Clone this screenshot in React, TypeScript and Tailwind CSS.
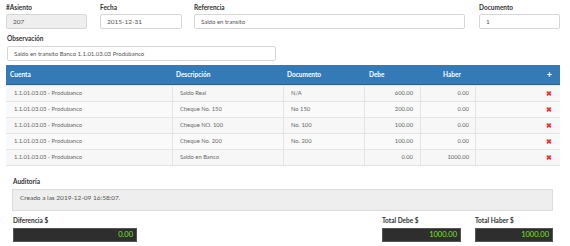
import type { FC, ReactNode } from 'react';

interface Line {
	cuenta: string;
	descripcion: string;
	documento: string;
	debe: string;
	haber: string;
}

const LINES: Line[] = [
	{ cuenta: '1.1.01.03.03 - Produbanco', descripcion: 'Saldo Real', documento: 'N/A', debe: '600.00', haber: '0.00' },
	{ cuenta: '1.1.01.03.03 - Produbanco', descripcion: 'Cheque No. 150', documento: 'No 150', debe: '200.00', haber: '0.00' },
	{ cuenta: '1.1.01.03.03 - Produbanco', descripcion: 'Cheque NO. 100', documento: 'No. 100', debe: '100.00', haber: '0.00' },
	{ cuenta: '1.1.01.03.03 - Produbanco', descripcion: 'Cheque No. 200', documento: 'No. 200', debe: '100.00', haber: '0.00' },
	{ cuenta: '1.1.01.03.03 - Produbanco', descripcion: 'Saldo en Banco', documento: '', debe: '0.00', haber: '1000.00' },
];

const COLS = 'grid grid-cols-[166px_111px_81px_56px_55px_85px]';

const Label: FC<{ children: ReactNode }> = ({ children }) => (
	<div className="text-[6.5px] leading-[9px] font-bold text-[#333]">{children}</div>
);

const Field: FC<{ value: string; readOnly?: boolean; className?: string }> = ({ value, readOnly, className }) => (
	<div
		className={`flex items-center h-[15px] px-[6px] border border-[#d6d6d6] rounded-[2px] text-[6.5px] text-[#555] ${
			readOnly ? 'bg-[#eeeeee]' : 'bg-white'
		} ${className ?? ''}`}
	>
		{value}
	</div>
);

const TotalBox: FC<{ label: string; value: string; width: string }> = ({ label, value, width }) => (
	<div className={`flex flex-col gap-[3px] ${width}`}>
		<div className="text-[6.5px] leading-[9px] font-bold text-[#333]">{label}</div>
		<div className="flex items-center justify-end h-[14px] px-[3px] bg-[#2e2e2e] border border-[#555] text-[7.5px] text-[#74e82c]">
			{value}
		</div>
	</div>
);

export default function App() {
	return (
		<div className="w-[570px] h-[246px] bg-white overflow-hidden font-['Lato','Liberation_Sans',sans-serif]">
			<div className="flex pl-[6px] pt-[3px]">
				<div className="flex flex-col gap-[2px] w-[81px]">
					<Label>#Asiento</Label>
					<Field value="207" readOnly />
				</div>
				<div className="flex flex-col gap-[2px] w-[82px] ml-[13px]">
					<Label>Fecha</Label>
					<Field value="2015-12-31" />
				</div>
				<div className="flex flex-col gap-[2px] w-[271px] ml-[12px]">
					<Label>Referencia</Label>
					<Field value="Saldo en transito" className="text-[6px]" />
				</div>
				<div className="flex flex-col gap-[2px] w-[81px] ml-[14px]">
					<Label>Documento</Label>
					<Field value="1" />
				</div>
			</div>

			<div className="flex flex-col gap-[3px] pl-[7px] pt-[5px] w-[276px]">
				<Label>Observación</Label>
				<Field value="Saldo en transito  Banco 1.1.01.03.03 Produbanco" className="h-[14px] text-[6px]" />
			</div>

			<div className="ml-[6px] mt-[4px] w-[554px] border-b border-[#e2e2e2]">
				<div className={`${COLS} h-[20px] bg-[#337ab7] border-b border-[#2a6496] text-white text-[6.5px] font-bold items-center`}>
					<div className="pl-[4px]">Cuenta</div>
					<div className="pl-[4px]">Descripción</div>
					<div className="pl-[4px]">Documento</div>
					<div className="pl-[5px]">Debe</div>
					<div className="pl-[23px]">Haber</div>
					<div className="text-right pr-[8px] text-[9px] leading-none">+</div>
				</div>
				{LINES.map((line, i) => (
					<div
						key={i}
						className={`${COLS} h-[16px] items-stretch text-[5.8px] text-[#666] border-t border-[#e4e4e4] ${
							i % 2 === 0 ? 'bg-[#f7f7f7]' : 'bg-[#fafafa]'
						}`}
					>
						<div className="flex items-center pl-[8px]">{line.cuenta}</div>
						<div className="flex items-center pl-[7px] border-l border-[#e4e4e4]">{line.descripcion}</div>
						<div className="flex items-center pl-[7px] border-l border-[#e4e4e4]">{line.documento}</div>
						<div className="flex items-center justify-end pr-[7px] border-l border-[#e4e4e4]">{line.debe}</div>
						<div className="flex items-center justify-end pr-[6px] border-l border-[#e4e4e4]">{line.haber}</div>
						<div className="flex items-center justify-end pr-[8px] border-l border-[#e4e4e4]">
							<span className="text-[#e53935] text-[7px] font-bold leading-none">✖</span>
						</div>
					</div>
				))}
			</div>

			<div className="flex flex-col gap-[3px] ml-[12px] mt-[11px] w-[541px]">
				<div className="text-[6.5px] leading-[9px] font-bold text-[#333] pl-[1px]">Auditoría</div>
				<div className="h-[22px] bg-[#eeeeee] border border-[#dcdcdc] px-[7px] pt-[3px] text-[6.5px] text-[#555]">
					Creado a las 2019-12-09 16:58:07.
				</div>
			</div>

			<div className="flex items-end ml-[13px] mt-[5px]">
				<TotalBox label="Diferencia $" value="0.00" width="w-[124px]" />
				<div className="ml-[245px]">
					<TotalBox label="Total Debe $" value="1000.00" width="w-[79px]" />
				</div>
				<div className="ml-[14px]">
					<TotalBox label="Total Haber $" value="1000.00" width="w-[78px]" />
				</div>
			</div>
		</div>
	);
}
